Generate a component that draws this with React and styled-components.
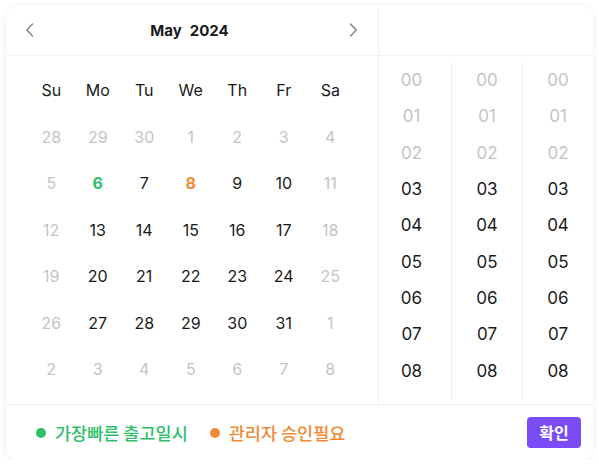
import React from "react";
import styled, { createGlobalStyle } from "styled-components";

const GlobalStyle = createGlobalStyle`
  html, body {
    margin: 0;
    padding: 0;
    background: #ffffff;
  }
  body {
    font-family: Inter, "Noto Sans CJK KR", "Noto Sans", sans-serif;
    color: #1a1a1a;
  }
`;

const weekdays = ["Su", "Mo", "Tu", "We", "Th", "Fr", "Sa"];

const days = [
  [28, "out"], [29, "out"], [30, "out"], [1, "off"], [2, "off"], [3, "off"], [4, "off"],
  [5, "off"], [6, "fast"], [7, "on"], [8, "admin"], [9, "on"], [10, "on"], [11, "off"],
  [12, "off"], [13, "on"], [14, "on"], [15, "on"], [16, "on"], [17, "on"], [18, "off"],
  [19, "off"], [20, "on"], [21, "on"], [22, "on"], [23, "on"], [24, "on"], [25, "off"],
  [26, "off"], [27, "on"], [28, "on"], [29, "on"], [30, "on"], [31, "on"], [1, "out"],
  [2, "out"], [3, "out"], [4, "out"], [5, "out"], [6, "out"], [7, "out"], [8, "out"],
];

const dayColors = {
  out: "#c4c4c4",
  off: "#c4c4c4",
  on: "#1a1a1a",
  fast: "#2fbf6b",
  admin: "#f08a35",
};

// only the visible part of the scroll list
const hours = Array.from({ length: 9 }, (_, i) => String(i).padStart(2, "0"));

export default function App() {
  return (
    <>
      <GlobalStyle />
      <Card>
        <Main>
          <CalendarPane>
            <MonthBar>
              <NavButton aria-label="previous month">
                <svg width="9" height="14" viewBox="0 0 9 14" fill="none">
                  <path d="M7.5 1L1.8 7l5.7 6" stroke="#8a8a8a" strokeWidth="1.6" strokeLinecap="round" strokeLinejoin="round" />
                </svg>
              </NavButton>
              <MonthTitle>
                <span>May</span>
                <span>2024</span>
              </MonthTitle>
              <NavButton aria-label="next month">
                <svg width="9" height="14" viewBox="0 0 9 14" fill="none">
                  <path d="M1.5 1l5.7 6-5.7 6" stroke="#8a8a8a" strokeWidth="1.6" strokeLinecap="round" strokeLinejoin="round" />
                </svg>
              </NavButton>
            </MonthBar>
            <DayGrid>
              {weekdays.map((w) => (
                <Weekday key={w}>{w}</Weekday>
              ))}
              {days.map(([d, kind], i) => (
                <Day key={i} $kind={kind}>
                  {d}
                </Day>
              ))}
            </DayGrid>
          </CalendarPane>
          <TimePane>
            <TimeBar />
            <TimeColumns>
              {[72, 71, 71].map((w, c) => (
                <TimeColumn key={c} $width={w} $first={c === 0}>
                  {hours.map((h, i) => (
                    <TimeItem key={h} $disabled={i < 3}>
                      {h}
                    </TimeItem>
                  ))}
                </TimeColumn>
              ))}
            </TimeColumns>
          </TimePane>
        </Main>
        <Footer>
          <Legends>
            <Legend $color="#2fbf6b">가장빠른 출고일시</Legend>
            <Legend $color="#f08a35">관리자 승인필요</Legend>
          </Legends>
          <ConfirmButton>확인</ConfirmButton>
        </Footer>
      </Card>
    </>
  );
}

const Card = styled.div`
  margin: 5px 0 0 6px;
  width: 587px;
  height: 455px;
  background: #fff;
  border-radius: 12px;
  box-shadow: 0 1px 6px rgba(0, 0, 0, 0.08);
  display: flex;
  flex-direction: column;
  overflow: hidden;
`;

const Main = styled.div`
  display: flex;
  height: 399px;
  border-bottom: 1px solid #efefef;
`;

const CalendarPane = styled.div`
  width: 372px;
  display: flex;
  flex-direction: column;
`;

const MonthBar = styled.div`
  height: 51px;
  box-sizing: border-box;
  border-bottom: 1px solid #f0f0f0;
  display: flex;
  align-items: center;
  justify-content: space-between;
  padding: 0 18px 0 17px;
`;

const NavButton = styled.button`
  border: 0;
  background: none;
  padding: 0;
  width: 12px;
  height: 20px;
  display: flex;
  align-items: center;
  justify-content: center;
  cursor: pointer;
`;

const MonthTitle = styled.div`
  display: flex;
  gap: 8px;
  font-size: 15px;
  font-weight: 700;
  color: #1a1a1a;
  margin-left: -4px;
`;

const DayGrid = styled.div`
  display: grid;
  grid-template-columns: repeat(7, 46.5px);
  grid-auto-rows: 46.5px;
  padding: 11px 0 0 22px;
`;

const Weekday = styled.div`
  display: flex;
  align-items: center;
  justify-content: center;
  font-size: 16px;
  color: #1a1a1a;
`;

const Day = styled.div`
  display: flex;
  align-items: center;
  justify-content: center;
  font-size: 16px;
  color: ${(p) => dayColors[p.$kind]};
  font-weight: ${(p) => (p.$kind === "fast" || p.$kind === "admin" ? 700 : 400)};
`;

const TimePane = styled.div`
  flex: 1;
  border-left: 1px solid #f0f0f0;
  display: flex;
  flex-direction: column;
`;

const TimeBar = styled.div`
  height: 51px;
  box-sizing: border-box;
  border-bottom: 1px solid #f0f0f0;
`;

const TimeColumns = styled.div`
  flex: 1;
  display: flex;
  padding: 6px 0 4px;
  min-height: 0;
`;

const TimeColumn = styled.div`
  flex: 0 0 ${(p) => p.$width}px;
  box-sizing: border-box;
  overflow: hidden;
  padding-right: ${(p) => (p.$first ? "7px" : "0")};
  & + & {
    border-left: 1px solid #f0f0f0;
  }
`;

const TimeItem = styled.div`
  height: 36.3px;
  display: flex;
  align-items: center;
  justify-content: center;
  font-size: 17px;
  color: ${(p) => (p.$disabled ? "#c4c4c4" : "#1a1a1a")};
`;

const Footer = styled.div`
  flex: 1;
  display: flex;
  align-items: center;
  justify-content: space-between;
  padding: 0 12px 0 30px;
`;

const Legends = styled.div`
  display: flex;
  gap: 22px;
`;

const Legend = styled.div`
  display: flex;
  align-items: center;
  gap: 9px;
  font-family: "Noto Sans CJK KR", sans-serif;
  font-size: 17.5px;
  font-weight: 500;
  line-height: 24px;
  color: ${(p) => p.$color};
  &::before {
    content: "";
    width: 10px;
    height: 10px;
    border-radius: 50%;
    background: ${(p) => p.$color};
  }
`;

const ConfirmButton = styled.button`
  width: 54px;
  height: 31px;
  border: 0;
  border-radius: 4px;
  background: #7b4cf5;
  color: #fff;
  font-family: "Noto Sans CJK KR", sans-serif;
  font-size: 16px;
  font-weight: 600;
  line-height: 31px;
  padding: 0;
  cursor: pointer;
`;
